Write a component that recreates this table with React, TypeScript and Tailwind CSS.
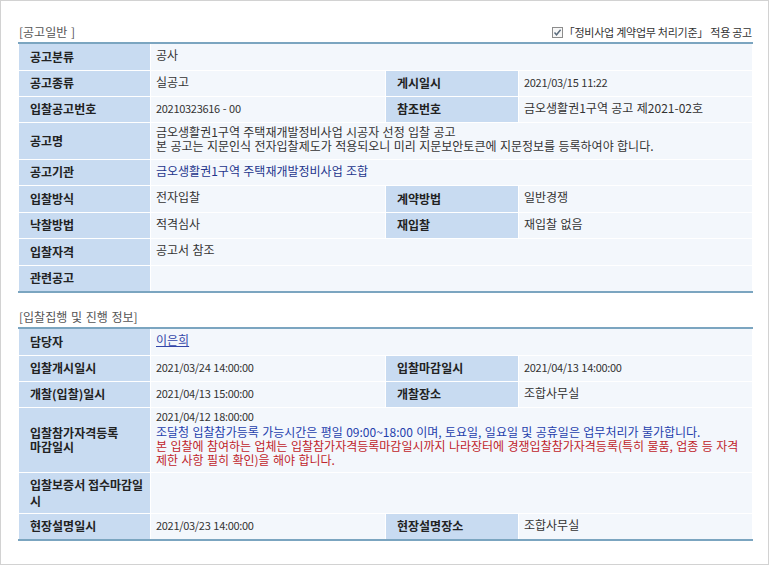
import * as React from "react";

type Cell = { label: React.ReactNode; value?: React.ReactNode; num?: boolean };

const FONT = "font-['Noto_Sans_CJK_KR',sans-serif]";

function Label({ children }: { children: React.ReactNode }) {
  return (
    <td className="border border-white bg-[#c8dbf1] pl-[11px] pr-[4px] align-middle text-[12px] leading-[14px] font-bold text-[#222]">
      {children}
    </td>
  );
}

function Value({ children, span, num }: { children?: React.ReactNode; span?: number; num?: boolean }) {
  return (
    <td
      colSpan={span}
      className={
        "border border-white bg-[#f3f7fc] pl-[5px] pr-0 pb-[3px] align-middle leading-[14px] text-[#333] [word-spacing:0.7px] break-keep " +
        (num ? "text-[11px] tracking-[-0.3px]" : "text-[12px]")
      }
    >
      {children}
    </td>
  );
}

function Row({ cells, h }: { cells: Cell[]; h: string }) {
  return (
    <tr className={h}>
      {cells.length === 1 ? (
        <>
          <Label>{cells[0].label}</Label>
          <Value span={3} num={cells[0].num}>
            {cells[0].value}
          </Value>
        </>
      ) : (
        cells.map((c, i) => (
          <React.Fragment key={i}>
            <Label>{c.label}</Label>
            <Value num={c.num}>{c.value}</Value>
          </React.Fragment>
        ))
      )}
    </tr>
  );
}

function InfoTable({ children }: { children: React.ReactNode }) {
  return (
    <table className="w-[734px] table-fixed border-collapse border-y-2 border-y-[#7ba5c0]">
      <colgroup>
        <col className="w-[132px]" />
        <col className="w-[235px]" />
        <col className="w-[133px]" />
        <col className="w-[234px]" />
      </colgroup>
      <tbody>{children}</tbody>
    </table>
  );
}

function CheckIcon() {
  return (
    <svg width="11" height="11" viewBox="0 0 11 11" className="shrink-0">
      <rect x="0.5" y="0.5" width="10" height="10" fill="#f7f7f7" stroke="#8c8c8c" />
      <path d="M2.5 5.5 L4.5 7.8 L8.6 2.8" fill="none" stroke="#5a6b7c" strokeWidth="1.4" />
    </svg>
  );
}

export default function App() {
  return (
    <div className={`${FONT} w-[769px] h-[565px] border border-[#d2d2d2] bg-white pl-[17px] pt-[21px]`}>
      <div className="w-[734px]">
        {/* 공고일반 */}
        <div className="flex h-[20px] items-center justify-between">
          <span className="pl-[1px] text-[12px] text-[#555] [word-spacing:1px]">[공고일반 ]</span>
          <span className="flex items-center gap-[1px] text-[11px] tracking-[-0.25px] text-[#333]">
            <CheckIcon />
            <span>「정비사업 계약업무 처리기준」 적용 공고</span>
          </span>
        </div>
        <InfoTable>
          <Row h="h-[27px]" cells={[{ label: "공고분류", value: "공사" }]} />
          <Row
            h="h-[26px]"
            cells={[
              { label: "공고종류", value: "실공고" },
              { label: "게시일시", value: "2021/03/15 11:22", num: true },
            ]}
          />
          <Row
            h="h-[26px]"
            cells={[
              { label: "입찰공고번호", value: "20210323616 - 00", num: true },
              { label: "참조번호", value: "금오생활권1구역 공고 제2021-02호" },
            ]}
          />
          <Row
            h="h-[37px]"
            cells={[
              {
                label: "공고명",
                value: (
                  <>
                    금오생활권1구역 주택재개발정비사업 시공자 선정 입찰 공고
                    <br />
                    본 공고는 지문인식 전자입찰제도가 적용되오니 미리 지문보안토큰에 지문정보를 등록하여야 합니다.
                  </>
                ),
              },
            ]}
          />
          <Row
            h="h-[26px]"
            cells={[
              {
                label: "공고기관",
                value: <span className="text-[#24358c]">금오생활권1구역 주택재개발정비사업 조합</span>,
              },
            ]}
          />
          <Row
            h="h-[27px]"
            cells={[
              { label: "입찰방식", value: "전자입찰" },
              { label: "계약방법", value: "일반경쟁" },
            ]}
          />
          <Row
            h="h-[26px]"
            cells={[
              { label: "낙찰방법", value: "적격심사" },
              { label: "재입찰", value: "재입찰 없음" },
            ]}
          />
          <Row h="h-[27px]" cells={[{ label: "입찰자격", value: "공고서 참조" }]} />
          <Row h="h-[27px]" cells={[{ label: "관련공고" }]} />
        </InfoTable>

        {/* 입찰집행 및 진행 정보 */}
        <div className="mt-[14px] flex h-[20px] items-center">
          <span className="pl-[1px] text-[12px] text-[#555] [word-spacing:1px]">[입찰집행 및 진행 정보]</span>
        </div>
        <InfoTable>
          <Row
            h="h-[27px]"
            cells={[
              {
                label: "담당자",
                value: <span className="text-[#3346a8] underline">이은희</span>,
              },
            ]}
          />
          <Row
            h="h-[26px]"
            cells={[
              { label: "입찰개시일시", value: "2021/03/24 14:00:00", num: true },
              { label: "입찰마감일시", value: "2021/04/13 14:00:00", num: true },
            ]}
          />
          <Row
            h="h-[26px]"
            cells={[
              { label: "개찰(입찰)일시", value: "2021/04/13 15:00:00", num: true },
              { label: "개찰장소", value: "조합사무실" },
            ]}
          />
          <Row
            h="h-[65px]"
            cells={[
              {
                label: (
                  <>
                    입찰참가자격등록
                    <br />
                    마감일시
                  </>
                ),
                value: (
                  <>
                    <div className="mb-[2px] text-[11px] tracking-[-0.3px]">2021/04/12 18:00:00</div>
                    <div className="text-[#2540ac]">
                      조달청 입찰참가등록 가능시간은 평일 09:00~18:00 이며, 토요일, 일요일 및 공휴일은 업무처리가 불가합니다.
                    </div>
                    <div className="text-[#c0242a]">
                      <span className="whitespace-nowrap">
                        본 입찰에 참여하는 업체는 입찰참가자격등록마감일시까지 나라장터에 경쟁입찰참가자격등록(특히 물품, 업종 등 자격
                      </span>
                      <br />
                      제한 사항 필히 확인)을 해야 합니다.
                    </div>
                  </>
                ),
              },
            ]}
          />
          <Row
            h="h-[41px]"
            cells={[
              {
                label: (
                  <div className="leading-[16px]">
                    입찰보증서 접수마감일
                    <br />시
                  </div>
                ),
              },
            ]}
          />
          <Row
            h="h-[27px]"
            cells={[
              { label: "현장설명일시", value: "2021/03/23 14:00:00", num: true },
              { label: "현장설명장소", value: "조합사무실" },
            ]}
          />
        </InfoTable>
      </div>
    </div>
  );
}
